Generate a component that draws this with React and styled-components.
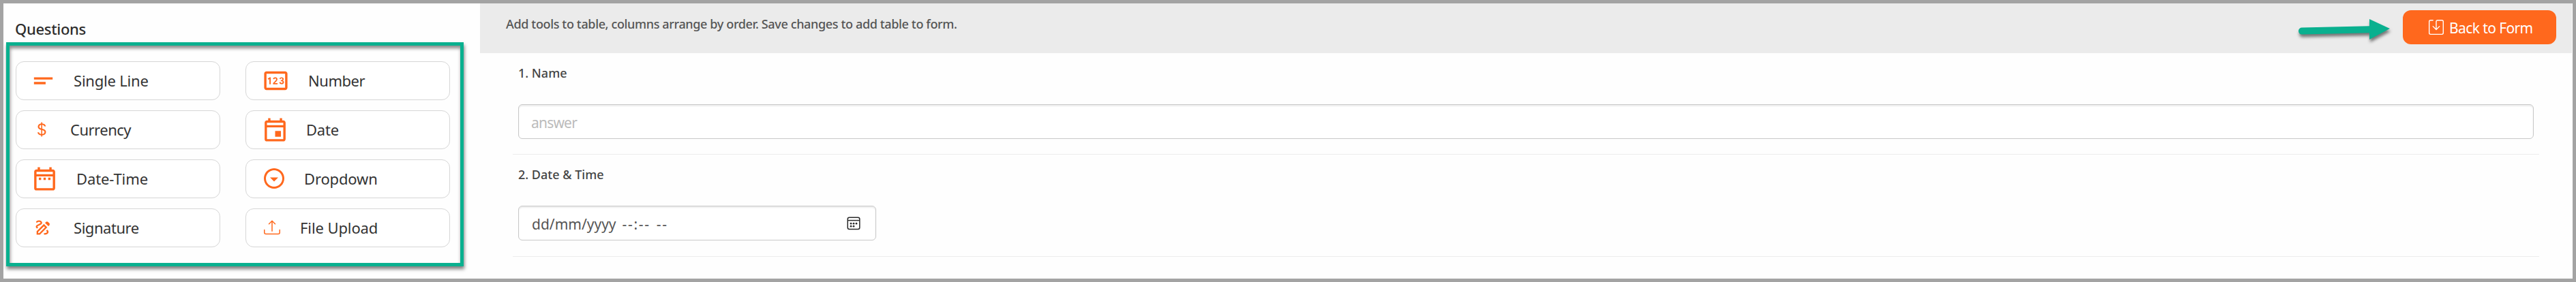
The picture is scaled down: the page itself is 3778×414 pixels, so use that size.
import React from "react";
import styled, { createGlobalStyle } from "styled-components";
import { BsCurrencyDollar, BsSave, BsUpload } from "react-icons/bs";
import {
  MdOutlineArrowDropDownCircle,
  MdOutlineDateRange,
  MdOutlineDraw,
  MdOutlineEvent,
  MdOutlinePin,
  MdShortText,
} from "react-icons/md";

const tools = [
  { name: "Single Line", icon: MdShortText, size: 41, left: 19, label: 84, spacing: -0.2 },
  { name: "Number", icon: MdOutlinePin, size: 41, left: 23, label: 91, spacing: -0.45 },
  { name: "Currency", icon: BsCurrencyDollar, size: 24, left: 25, label: 79, spacing: -0.5 },
  { name: "Date", icon: MdOutlineEvent, size: 41, left: 22, label: 88, spacing: -0.2 },
  { name: "Date-Time", icon: MdOutlineDateRange, size: 41, left: 21, label: 88, spacing: -0.1 },
  { name: "Dropdown", icon: MdOutlineArrowDropDownCircle, size: 36, left: 23, label: 85, spacing: -0.15 },
  { name: "Signature", icon: MdOutlineDraw, size: 28, left: 25, label: 84, spacing: -0.45 },
  { name: "File Upload", icon: BsUpload, size: 24, left: 26, label: 79, spacing: -0.1 },
];

function ToolTile({ tool }) {
  const Icon = tool.icon;
  return (
    <Tile>
      <IconSlot $width={tool.label} $left={tool.left}>
        <Icon size={tool.size} />
      </IconSlot>
      <TileLabel $spacing={tool.spacing}>{tool.name}</TileLabel>
    </Tile>
  );
}

function CalendarIcon() {
  return (
    <svg width="20" height="20" viewBox="0 0 20 20" fill="none">
      <rect x="1.2" y="1.2" width="17.6" height="17.4" rx="2.5" stroke="#2b2b2b" strokeWidth="1.5" />
      <path d="M1 5.6h18" stroke="#2b2b2b" strokeWidth="1.5" />
      <g fill="#2b2b2b">
        <circle cx="6" cy="10.2" r="1.35" />
        <circle cx="10" cy="10.2" r="1.35" />
        <circle cx="14" cy="10.2" r="1.35" />
        <circle cx="6" cy="14.2" r="1.35" />
        <circle cx="10" cy="14.2" r="1.35" />
      </g>
    </svg>
  );
}

function PointerArrow() {
  return (
    <ArrowSvg width="134" height="32" viewBox="0 0 134 32">
      <path d="M5 12.6 104 10.2V0l30 14-30 16V20.2L5 22.6a5 5 0 0 1 0-10z" fill="#09b08f" />
    </ArrowSvg>
  );
}

export default function App() {
  return (
    <Page>
      <GlobalStyle />
      <Sidebar>
        <SidebarTitle>Questions</SidebarTitle>
        <ToolPanel>
          {tools.map((tool) => (
            <ToolTile key={tool.name} tool={tool} />
          ))}
        </ToolPanel>
      </Sidebar>
      <Main>
        <Header>
          <Hint>Add tools to table, columns arrange by order. Save changes to add table to form.</Hint>
          <Actions>
            <PointerArrow />
            <BackButton>
              <BsSave size={22} />
              <span>Back to Form</span>
            </BackButton>
          </Actions>
        </Header>
        <Fields>
          <Field>
            <FieldLabel>1. Name</FieldLabel>
            <TextInput placeholder="answer" />
          </Field>
          <Field>
            <FieldLabel>2. Date &amp; Time</FieldLabel>
            <DateInput>
              <DateText>
                <span>dd/mm/yyyy</span>
                <Dashes>--:--</Dashes>
                <Dashes>--</Dashes>
              </DateText>
              <CalendarIcon />
            </DateInput>
          </Field>
        </Fields>
      </Main>
    </Page>
  );
}

const GlobalStyle = createGlobalStyle`
  * {
    box-sizing: border-box;
  }

  body {
    margin: 0;
    background: #fff;
    font-family: "Noto Sans", "Open Sans", sans-serif;
  }
`;

const Page = styled.div`
  display: flex;
  width: 3778px;
  height: 414px;
  border: 5px solid #a3a3a3;
  background: #fefefe;
  overflow: hidden;
`;

const Sidebar = styled.aside`
  flex: 0 0 699px;
  padding-left: 4px;
`;

const SidebarTitle = styled.h2`
  height: 57px;
  margin: 0;
  padding: 21px 0 0 13px;
  font-size: 22px;
  font-weight: 500;
  line-height: 32px;
  letter-spacing: -0.3px;
  color: #2d2d2d;
`;

const ToolPanel = styled.div`
  display: grid;
  grid-template-columns: 300px 300px;
  grid-auto-rows: 57px;
  gap: 15px 37px;
  width: 671px;
  height: 329px;
  padding: 23px 9px;
  border: 5px solid #09b08f;
  box-shadow: 1px 4px 5px rgba(0, 0, 0, 0.5), inset 1px 4px 5px rgba(0, 0, 0, 0.45);
`;

const Tile = styled.div`
  display: flex;
  align-items: center;
  padding-bottom: 1px;
  border: 1px solid #d6d6d6;
  border-radius: 12px;
  background: #fff;
`;

const IconSlot = styled.div`
  display: flex;
  flex: none;
  width: ${(p) => p.$width}px;
  padding-left: ${(p) => p.$left}px;
  color: #ff681d;
`;

const TileLabel = styled.span`
  font-size: 22px;
  line-height: 30px;
  letter-spacing: ${(p) => p.$spacing}px;
  color: #333;
`;

const Main = styled.main`
  flex: 1;
  padding-right: 1px;
`;

const Header = styled.header`
  display: flex;
  justify-content: space-between;
  height: 73px;
  padding: 10px 23px 0 38px;
  background: #ebebeb;
`;

const Hint = styled.p`
  margin: 7px 0 0;
  font-size: 18px;
  font-weight: 500;
  line-height: 26px;
  letter-spacing: -0.36px;
  color: #555;
`;

const Actions = styled.div`
  display: flex;
  align-items: flex-start;
  gap: 19px;
`;

const ArrowSvg = styled.svg`
  margin-top: 13px;
  overflow: visible;
  filter: drop-shadow(1px 4px 2px rgba(0, 0, 0, 0.5));
`;

const BackButton = styled.button`
  display: flex;
  align-items: center;
  gap: 8px;
  width: 225px;
  height: 50px;
  padding: 0 0 0 38px;
  border: 0;
  border-radius: 12px;
  background: #ff681d;
  color: #fff;
  font-family: inherit;
  font-size: 21px;
  letter-spacing: -0.6px;
  white-space: nowrap;

  svg {
    margin-bottom: 1px;
  }

  span {
    padding-top: 1px;
  }
`;

const Fields = styled.div`
  width: 2972px;
  margin-left: 48px;
`;

const Field = styled.section`
  height: 149px;
  padding: 16px 8px 0;
  border-bottom: 1px solid #ececec;

  & + & {
    height: 150px;
  }
`;

const FieldLabel = styled.label`
  display: block;
  height: 59px;
  font-size: 18px;
  font-weight: 500;
  line-height: 26px;
  color: #444;
`;

const TextInput = styled.input`
  display: block;
  width: 2956px;
  height: 51px;
  padding: 2px 18px 0;
  border: 1px solid #c8c8c8;
  border-radius: 6px;
  background: #fff;
  box-shadow: inset 0 2px 2px rgba(0, 0, 0, 0.08);
  font-family: inherit;
  font-size: 21px;
  letter-spacing: -0.8px;

  &::placeholder {
    color: #bbb;
    opacity: 1;
  }
`;

const DateInput = styled.div`
  display: flex;
  align-items: center;
  justify-content: space-between;
  width: 525px;
  height: 51px;
  padding: 0 22px 0 19px;
  border: 1px solid #c8c8c8;
  border-radius: 6px;
  background: #fff;
  box-shadow: inset 0 2px 2px rgba(0, 0, 0, 0.08);
`;

const DateText = styled.div`
  display: flex;
  gap: 9px;
  padding-top: 3px;
  font-size: 21px;
  color: #555;
`;

const Dashes = styled.span`
  letter-spacing: 1.7px;
`;
